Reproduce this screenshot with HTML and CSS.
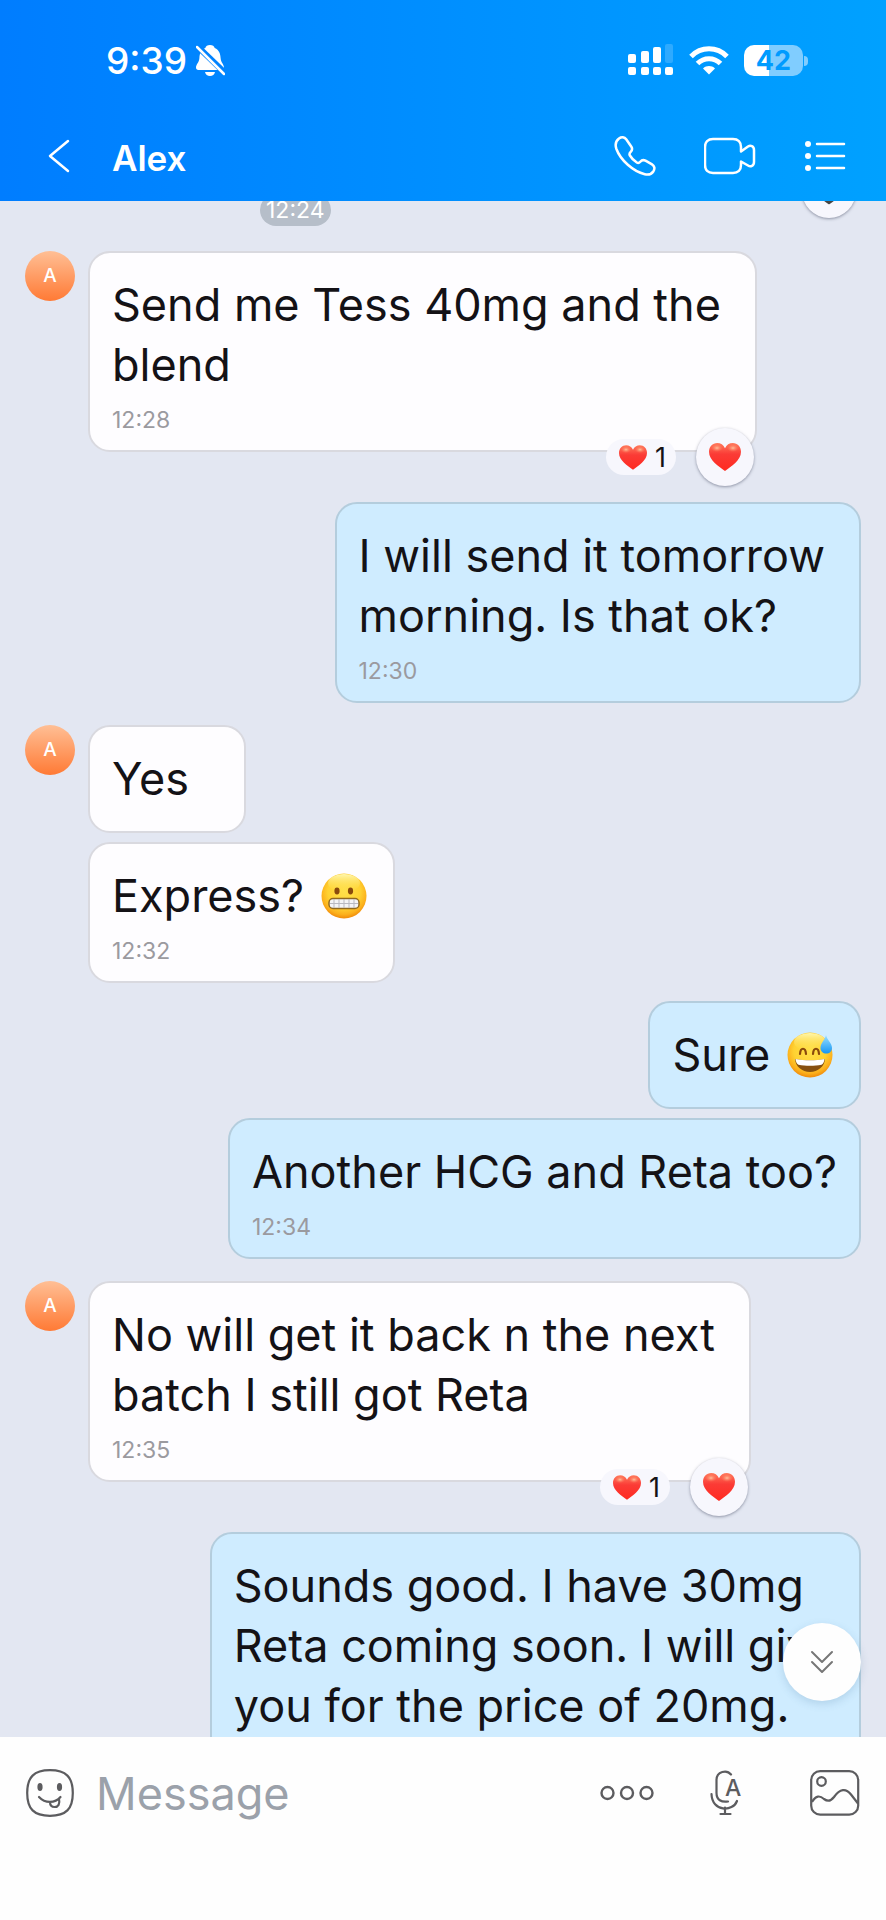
FILE: index.html
```html
<!DOCTYPE html>
<html lang="en">
<head>
    <meta charset="UTF-8">
    <meta name="viewport" content="width=device-width, initial-scale=1.0">
    <title>Alex</title>
    <link rel="stylesheet" href="styles.css">
</head>
<body>
    <!-- Shared shapes: heart and the two faces -->
    <svg class="defs" width="0" height="0" aria-hidden="true">
        <defs>
            <linearGradient id="heartFill" x1="0" y1="0" x2="0" y2="1">
                <stop offset="0" stop-color="#ff7a5c"/>
                <stop offset="0.4" stop-color="#fb3b36"/>
                <stop offset="1" stop-color="#ff2a20"/>
            </linearGradient>
            <radialGradient id="heartShine">
                <stop offset="0" stop-color="#ffc09a"/>
                <stop offset="1" stop-color="#ff7a5c" stop-opacity="0"/>
            </radialGradient>
            <radialGradient id="faceFill" cx="0.5" cy="0.4" r="0.6">
                <stop offset="0" stop-color="#ffe04a"/>
                <stop offset="0.6" stop-color="#ffd232"/>
                <stop offset="0.85" stop-color="#fcb01c"/>
                <stop offset="1" stop-color="#f08a0a"/>
            </radialGradient>
            <linearGradient id="faceShine" x1="0" y1="0" x2="0" y2="1">
                <stop offset="0" stop-color="#fff7b0"/>
                <stop offset="1" stop-color="#ffe04a" stop-opacity="0"/>
            </linearGradient>
            <linearGradient id="dropFill" x1="0" y1="0" x2="0" y2="1">
                <stop offset="0" stop-color="#9be0ff"/>
                <stop offset="1" stop-color="#1596f5"/>
            </linearGradient>
            <symbol id="heart" viewBox="0 0 32 28">
                <path d="M16 28C10 23.500 0 17.500 0 8.800 0 3.800 3.500 0 8.200 0c3.500 0 6.300 1.900 7.800 5.200C17.500 1.900 20.300 0 23.800 0 28.500 0 32 3.800 32 8.800 32 17.500 22 23.500 16 28z" fill="url(#heartFill)"/>
                <ellipse cx="8" cy="5" rx="6" ry="4" fill="url(#heartShine)"/>
                <ellipse cx="24" cy="5" rx="6" ry="4" fill="url(#heartShine)"/>
            </symbol>
        </defs>
    </svg>

    <header class="top">
        <div class="status-bar">
            <div class="status-left">
                <span class="clock">9:39</span>
                <svg width="29" height="31" viewBox="0 0 29 31" aria-hidden="true">
                    <path d="M14 0c2.600 0 4.200 1.300 4.700 3 4.500 1.900 5.700 6 5.900 10 .2 4.500 3.400 6.500 3.400 9.500 0 1.500-.8 2.500-2.500 2.500H2.500C.8 25 0 24 0 22.500 0 19.500 3.200 17.500 3.400 13 3.600 9 4.800 4.900 9.300 3 9.800 1.300 11.400 0 14 0zM9 27h10c-.5 2.500-2.500 4-5 4s-4.500-1.500-5-4z" fill="#fff"/>
                    <path d="M0 0L28 27" stroke="#0083ff" stroke-width="6"/>
                    <path d="M1 2l27 27" stroke="#fff" stroke-width="2.500" stroke-linecap="round"/>
                </svg>
            </div>
            <div class="status-right">
                <svg width="46" height="32" viewBox="0 0 46 32" fill="#fff" aria-hidden="true">
                    <rect x="0" y="10" width="8" height="9" rx="2"/>
                    <rect x="13" y="7" width="8" height="12" rx="2"/>
                    <rect x="25" y="3" width="8" height="16" rx="2"/>
                    <rect x="37" y="0" width="8" height="19" rx="2" opacity="0.180"/>
                    <rect x="0" y="23" width="8" height="8" rx="2"/>
                    <rect x="13" y="23" width="8" height="8" rx="2"/>
                    <rect x="25" y="23" width="8" height="8" rx="2"/>
                    <rect x="37" y="23" width="8" height="8" rx="2"/>
                </svg>
                <svg width="40" height="29" viewBox="0 0 40 29" aria-hidden="true">
                    <g fill="none" stroke="#fff" stroke-width="5">
                        <path d="M2 10.500C12 .3 28 .3 38 10.500"/>
                        <path d="M8.500 17.500c6.500-6.500 16.500-6.500 23 0"/>
                    </g>
                    <path d="M20 28.500l-6-6c3.500-3.200 8.500-3.200 12 0z" fill="#fff"/>
                </svg>
                <div class="battery"><span class="battery-level">42</span></div>
            </div>
        </div>

        <nav class="title-bar">
            <button class="icon-button back" aria-label="Back">
                <svg width="22" height="34" viewBox="0 0 22 34" fill="none" stroke="#fff" stroke-width="2.500" stroke-linecap="round" stroke-linejoin="round"><path d="M20 2L2 17l18 15"/></svg>
            </button>
            <h1>Alex</h1>
            <button class="icon-button" aria-label="Call">
                <svg width="42" height="40" viewBox="0 0 42 40" fill="none" stroke="#fff" stroke-width="2.500" stroke-linejoin="round"><path d="M5 2.500c2.500-1.800 5.500-1.500 7.200.8l5 7.200c1.500 2.200 1.300 3.500-.5 5.300-1.500 1.500-1.700 2.200-.8 3.700 1.600 2.800 4.200 5.300 6.900 7 1.500.9 2.300.6 3.500-.8 1.500-1.800 3-2.100 5.200-1l6.500 3.700c2.500 1.500 3.100 4.200 1.500 6.800-2 3-5.200 3.800-8.700 3-11.500-2.700-24.300-14-28.500-25.500C1 8.700 1.800 5 5 2.500z"/></svg>
            </button>
            <button class="icon-button" aria-label="Video call">
                <svg width="52" height="38" viewBox="0 0 52 38" fill="none" stroke="#fff" stroke-width="2.500" stroke-linejoin="round"><path d="M9 2h20c5 0 8 3 8 8v4.500l7-5c2.500-1.500 6-.5 6 3.500v12c0 4-3.500 5-6 3.500l-7-4V28c0 5-3 8-8 8H9c-5 0-8-3-8-8V10c0-5 3-8 8-8z"/></svg>
            </button>
            <button class="icon-button" aria-label="Options">
                <svg width="42" height="32" viewBox="0 0 42 32" fill="#fff"><circle cx="4" cy="4" r="3"/><circle cx="4" cy="16" r="3"/><circle cx="4" cy="28" r="3"/><path d="M13 4h27M13 16h27M13 28h27" stroke="#fff" stroke-width="2.500" stroke-linecap="round"/></svg>
            </button>
        </nav>
    </header>

    <main class="chat">
        <!-- Tail of the previous message, scrolled under the header -->
        <div class="previous">
            <time class="time-pill">12:24</time>
            <button class="react" aria-label="React">
                <svg width="32" height="28" viewBox="0 0 32 28" fill="none" stroke="#444" stroke-width="2.500" stroke-linejoin="round"><path d="M16 26C10 22 4 17 4 10c0-8 9-9 12-3 3-6 12-5 12 3 0 7-6 12-12 16z"/></svg>
            </button>
        </div>

        <section class="group incoming">
            <div class="avatar">A</div>
            <div class="bubbles">
                <div class="bubble multi reacted">
                    <p>Send me Tess 40mg and the<br>blend</p>
                    <time>12:28</time>
                    <div class="reactions">
                        <button class="count"><svg width="28" height="25"><use href="#heart"/></svg>1</button>
                        <button class="react" aria-label="React with heart"><svg width="32" height="28"><use href="#heart"/></svg></button>
                    </div>
                </div>
            </div>
        </section>

        <section class="group outgoing">
            <div class="bubbles">
                <div class="bubble multi">
                    <p>I will send it tomorrow<br>morning. Is that ok?</p>
                    <time>12:30</time>
                </div>
            </div>
        </section>

        <section class="group incoming">
            <div class="avatar">A</div>
            <div class="bubbles">
                <div class="bubble">
                    <p>Yes</p>
                </div>
                <div class="bubble">
                    <p>Express?
                        <svg class="emoji" viewBox="0 0 46 46" role="img" aria-label="Grimacing face">
                            <circle cx="23" cy="23" r="22.500" fill="url(#faceFill)"/>
                            <ellipse cx="23" cy="10" rx="16" ry="9" fill="url(#faceShine)"/>
                            <ellipse cx="16" cy="18" rx="2.600" ry="3.400" fill="#8a4a0c"/>
                            <ellipse cx="29.500" cy="18" rx="2.600" ry="3.400" fill="#8a4a0c"/>
                            <rect x="8" y="25.500" width="30" height="10" rx="4" fill="#f4f4f6" stroke="#91691f" stroke-width="1.500"/>
                            <path d="M9 30.500h28M13 26v9M18 26v9M23 26v9M28 26v9M33 26v9" stroke="#b9b9c0"/>
                        </svg>
                    </p>
                    <time>12:32</time>
                </div>
            </div>
        </section>

        <section class="group outgoing">
            <div class="bubbles">
                <div class="bubble">
                    <p>Sure
                        <svg class="emoji" viewBox="0 0 46 46" role="img" aria-label="Grinning face with sweat">
                            <circle cx="23" cy="23" r="22.500" fill="url(#faceFill)"/>
                            <ellipse cx="23" cy="10" rx="16" ry="9" fill="url(#faceShine)"/>
                            <path d="M13 22c.5-7 5.500-7 6 0M26 22c.5-7 5.500-7 6 0" fill="none" stroke="#8a4a0c" stroke-width="2.200" stroke-linecap="round"/>
                            <path d="M8 27c9 1.800 21 1.800 30 0-.5 7.500-7 13-15 13S8.500 34.500 8 27z" fill="#87500f"/>
                            <path d="M8.500 27c9 1.800 20 1.800 29 0-.3 3-1.500 5-3 5.700-7 1.500-16 1.500-23 0-1.500-.7-2.700-2.700-3-5.700z" fill="#fff"/>
                            <path d="M39 3c1 5 6 8 6 13 0 3.500-2.500 5.500-5.700 5.500S33.500 19.500 33.500 16C33.500 11 38 8 39 3z" fill="url(#dropFill)"/>
                        </svg>
                    </p>
                </div>
                <div class="bubble">
                    <p>Another HCG and Reta too?</p>
                    <time>12:34</time>
                </div>
            </div>
        </section>

        <section class="group incoming">
            <div class="avatar">A</div>
            <div class="bubbles">
                <div class="bubble multi reacted">
                    <p>No will get it back n the next<br>batch I still got Reta</p>
                    <time>12:35</time>
                    <div class="reactions">
                        <button class="count"><svg width="28" height="25"><use href="#heart"/></svg>1</button>
                        <button class="react" aria-label="React with heart"><svg width="32" height="28"><use href="#heart"/></svg></button>
                    </div>
                </div>
            </div>
        </section>

        <section class="group outgoing">
            <div class="bubbles">
                <div class="bubble">
                    <p>Sounds good. I have 30mg<br>Reta coming soon. I will give<br>you for the price of 20mg.</p>
                </div>
            </div>
        </section>

        <button class="scroll-down" aria-label="Scroll to latest">
            <svg width="24" height="24" viewBox="0 0 24 24" fill="none" stroke="#777" stroke-width="2" stroke-linecap="round" stroke-linejoin="round"><path d="M2 2l10 10L22 2M2 12l10 10 10-10"/></svg>
        </button>
    </main>

    <footer class="composer">
        <button class="icon-button" aria-label="Stickers">
            <svg width="48" height="48" viewBox="0 0 48 48" fill="none" stroke="#5c5c5f" stroke-width="2.200" stroke-linecap="round">
                <path d="M24 1.200C40 1.200 46.800 8 46.800 24S40 46.800 24 46.800 1.200 40 1.200 24 8 1.200 24 1.200z"/>
                <ellipse cx="14" cy="18" rx="2.600" ry="4" fill="#5c5c5f" stroke="none"/>
                <ellipse cx="33.500" cy="18" rx="2.600" ry="4" fill="#5c5c5f" stroke="none"/>
                <path d="M13 28c6 6.500 16 6.500 21.500 0M24 33c0 3 1.800 5 4.700 5 3.500 0 5.500-3 4.300-8"/>
            </svg>
        </button>
        <input class="message-input" type="text" placeholder="Message" aria-label="Message">
        <button class="icon-button" aria-label="More">
            <svg width="54" height="16" viewBox="0 0 54 16" fill="none" stroke="#5c5c5f" stroke-width="2.400"><circle cx="7.500" cy="8" r="6"/><circle cx="27" cy="8" r="6"/><circle cx="46.500" cy="8" r="6"/></svg>
        </button>
        <button class="icon-button mic" aria-label="Voice to text">
            <svg width="34" height="46" viewBox="0 0 34 46" fill="none" stroke="#5c5c5f" stroke-width="2.200" stroke-linecap="round">
                <path d="M21 4.500C17 -.5 6.500 1 6.500 10v13c0 7 5 9.500 11.500 8.500"/>
                <path d="M1.500 24C2 42 23 42 27 31M15 37.500v6.500M10.500 44h10"/>
                <text x="15" y="26" class="mic-letter">A</text>
            </svg>
        </button>
        <button class="icon-button" aria-label="Gallery">
            <svg width="50" height="46" viewBox="0 0 50 46" fill="none" stroke="#5c5c5f" stroke-width="2.200" stroke-linejoin="round">
                <rect x="1.200" y="1.200" width="47" height="43.500" rx="9"/>
                <circle cx="11.500" cy="11.500" r="4.300"/>
                <path d="M2 32c4-7 8-6.500 12-3 4 3 7 2 10-2 6-8.500 12-9 17-2.500l7 9"/>
            </svg>
        </button>
    </footer>
</body>
</html>
```

FILE: styles.css
```css
* {
    box-sizing: border-box;
}

body {
    margin: 0;
    height: 100vh;
    display: flex;
    flex-direction: column;
    font-family: Inter, "Liberation Sans", sans-serif;
    background-color: #fefefe;
    color: #141216;
}

button {
    border: none;
    padding: 0;
    background: none;
    font: inherit;
    color: inherit;
    cursor: pointer;
}

svg {
    display: block;
}

.defs {
    position: absolute;
}

.icon-button {
    display: flex;
    flex-shrink: 0;
}

/* Header */
.top {
    flex-shrink: 0;
    background: linear-gradient(to right, #007dff, #008fff 50%, #00a1ff);
    color: white;
}

.status-bar {
    display: flex;
    justify-content: space-between;
    align-items: center;
    height: 120px;
    padding: 0 83px 0 106px;
}

.status-left {
    display: flex;
    align-items: center;
    gap: 9px;
}

.clock {
    font-size: 37px;
    font-weight: 500;
}

.status-right {
    display: flex;
    align-items: center;
    gap: 15px;
}

.battery {
    position: relative;
    width: 59px;
    height: 31px;
    border-radius: 10px;
    background: linear-gradient(to right, white 43%, #80cdff 43%);
    text-align: center;
}

.battery::after {
    content: "";
    position: absolute;
    right: -5px;
    top: 11px;
    width: 4px;
    height: 10px;
    border-radius: 0 4px 4px 0;
    background-color: #80cdff;
}

.battery-level {
    font-size: 27px;
    line-height: 31px;
    font-weight: 700;
    color: #009bff;
}

.title-bar {
    display: flex;
    align-items: center;
    height: 81px;
    padding: 0 40px 9px 48px;
    gap: 48px;
}

.title-bar .back {
    margin-right: -6px;
}

.title-bar h1 {
    flex: 1;
    margin: 0;
    padding-top: 4px;
    font-size: 35px;
    line-height: 44px;
    font-weight: 600;
}

/* Messages */
.chat {
    position: relative;
    flex: 1;
    min-height: 0;
    overflow: hidden;
    padding: 0 25px;
    background-color: #e3e7f2;
}

.previous {
    display: flex;
    justify-content: space-between;
    height: 62px;
    margin-top: -37px;
    margin-bottom: 25px;
    padding: 0 5px 0 235px;
}

.time-pill {
    align-self: flex-end;
    padding: 0 6px;
    border-radius: 16px;
    background-color: #b6bec9;
    color: white;
    font-size: 23px;
    line-height: 32px;
}

.group {
    display: flex;
}

.incoming {
    margin-top: 22px;
}

.previous + .group {
    margin-top: 0;
}

.outgoing {
    margin-top: 18px;
    justify-content: flex-end;
}

.avatar {
    flex-shrink: 0;
    width: 50px;
    height: 50px;
    margin-right: 13px;
    border-radius: 50%;
    background: linear-gradient(#ffbf95, #ff7a35);
    color: white;
    font-size: 19px;
    line-height: 50px;
    font-weight: 500;
    text-align: center;
}

.bubbles {
    display: flex;
    flex-direction: column;
    align-items: flex-start;
    gap: 9px;
}

.outgoing .bubbles {
    align-items: flex-end;
}

.bubble {
    position: relative;
    min-width: 158px;
    padding: 22px;
    border: 2px solid #d9d9df;
    border-radius: 22px;
    background-color: #fefdff;
}

.outgoing .bubble {
    border-color: #b4cddd;
    background-color: #cfecff;
}

.bubble.multi {
    padding-right: 34px;
}

.bubble.reacted {
    margin-bottom: 32px;
}

.bubble p {
    margin: 0;
    font-size: 45px;
    line-height: 60px;
}

.bubble time {
    display: block;
    height: 33px;
    padding-top: 11px;
    color: #9b9a9f;
    font-size: 23px;
    line-height: 28px;
}

.emoji {
    display: inline-block;
    width: 46px;
    height: 46px;
    margin: 0 4px;
    vertical-align: -7px;
}

/* Reactions hang over the lower edge of the bubble */
.reactions {
    position: absolute;
    right: 1px;
    bottom: -36px;
    display: flex;
    align-items: center;
    gap: 20px;
}

.count {
    display: flex;
    align-items: center;
    gap: 8px;
    height: 36px;
    padding: 0 10px 0 13px;
    border-radius: 18px;
    background-color: #f7f7fd;
    font-size: 27px;
}

.react {
    display: flex;
    align-items: center;
    justify-content: center;
    width: 58px;
    height: 58px;
    border-radius: 50%;
    background-color: #f7f7fd;
    box-shadow: 0 1px 3px rgba(60, 65, 90, 0.5);
}

.previous .react {
    width: 54px;
    height: 54px;
}

.scroll-down {
    position: absolute;
    right: 25px;
    bottom: 36px;
    display: flex;
    align-items: center;
    justify-content: center;
    width: 78px;
    height: 78px;
    border-radius: 50%;
    background-color: #fefefe;
    box-shadow: 0 3px 8px rgba(60, 110, 150, 0.2);
}

/* Composer */
.composer {
    flex-shrink: 0;
    display: flex;
    align-items: center;
    gap: 56px;
    padding: 24px 26px 95px;
}

.message-input {
    flex: 1;
    min-width: 0;
    height: 64px;
    margin-left: -34px;
    padding: 0;
    border: none;
    outline: none;
    background: none;
    color: #141216;
    font-family: inherit;
    font-size: 45px;
}

.message-input::placeholder {
    color: #9ba1aa;
    opacity: 1;
}

.mic {
    margin-right: 10px;
}

.mic-letter {
    fill: #5c5c5f;
    stroke: none;
    font-size: 23px;
    font-weight: 500;
}
```
